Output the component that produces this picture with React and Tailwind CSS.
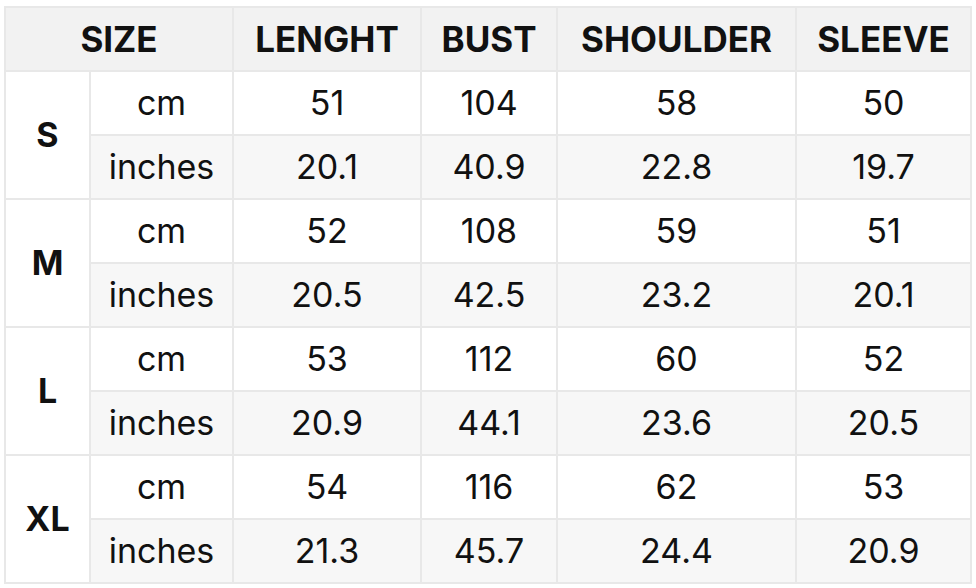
import React from 'react';

const rows = [
  { size: 'S', cm: ['51', '104', '58', '50'], inch: ['20.1', '40.9', '22.8', '19.7'] },
  { size: 'M', cm: ['52', '108', '59', '51'], inch: ['20.5', '42.5', '23.2', '20.1'] },
  { size: 'L', cm: ['53', '112', '60', '52'], inch: ['20.9', '44.1', '23.6', '20.5'] },
  { size: 'XL', cm: ['54', '116', '62', '53'], inch: ['21.3', '45.7', '24.4', '20.9'] },
];

const cell = 'border-2 border-[#e8e8e8] text-center h-[64px] p-0 leading-none';

const App = () => {
  return (
    <div className="w-[976px] h-[588px] bg-white pl-[4px] pt-[6px]" style={{ fontFamily: 'Inter, "Liberation Sans", sans-serif' }}>
      <table className="border-collapse table-fixed text-[34px] text-[#111]">
        <colgroup>
          <col className="w-[85px]" />
          <col className="w-[143px]" />
          <col className="w-[188px]" />
          <col className="w-[136px]" />
          <col className="w-[239px]" />
          <col className="w-[175px]" />
        </colgroup>
        <thead>
          <tr className="bg-[#f2f2f2] font-bold text-[35px]">
            <th colSpan={2} className={cell}>SIZE</th>
            <th className={cell}>LENGHT</th>
            <th className={cell}>BUST</th>
            <th className={cell}>SHOULDER</th>
            <th className={cell}>SLEEVE</th>
          </tr>
        </thead>
        <tbody>
          {rows.map((r) => (
            <React.Fragment key={r.size}>
              <tr className="bg-white">
                <td rowSpan={2} className={`${cell} font-bold bg-white`}>{r.size}</td>
                <td className={cell}>cm</td>
                {r.cm.map((v, i) => <td key={i} className={cell}>{v}</td>)}
              </tr>
              <tr className="bg-[#f7f7f7]">
                <td className={cell}>inches</td>
                {r.inch.map((v, i) => <td key={i} className={cell}>{v}</td>)}
              </tr>
            </React.Fragment>
          ))}
        </tbody>
      </table>
    </div>
  );
};

export default App;
